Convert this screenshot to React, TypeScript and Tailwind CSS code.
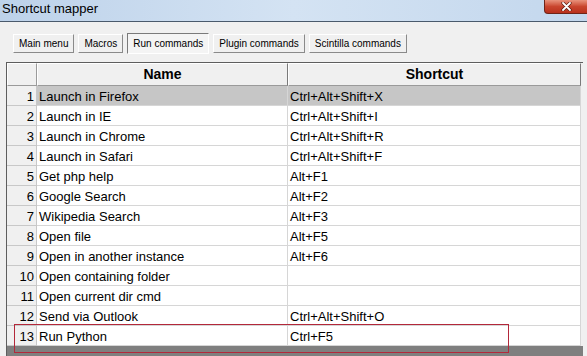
import React from "react";

const rows: [string, string][] = [
  ["Launch in Firefox", "Ctrl+Alt+Shift+X"],
  ["Launch in IE", "Ctrl+Alt+Shift+I"],
  ["Launch in Chrome", "Ctrl+Alt+Shift+R"],
  ["Launch in Safari", "Ctrl+Alt+Shift+F"],
  ["Get php help", "Alt+F1"],
  ["Google Search", "Alt+F2"],
  ["Wikipedia Search", "Alt+F3"],
  ["Open file", "Alt+F5"],
  ["Open in another instance", "Alt+F6"],
  ["Open containing folder", ""],
  ["Open current dir cmd", ""],
  ["Send via Outlook", "Ctrl+Alt+Shift+O"],
  ["Run Python", "Ctrl+F5"],
];

const tabs = ["Main menu", "Macros", "Run commands", "Plugin commands", "Scintilla commands"];

function Tab({ label, active }: { label: string; active: boolean }) {
  return (
    <div
      className={
        active
          ? "h-[21px] px-[5px] flex items-center border border-t-[#7a7a7a] border-l-[#7a7a7a] border-b-white border-r-white bg-[#f4f4f4] text-[10px] text-black"
          : "h-[19px] mt-[1px] px-[5px] flex items-center border border-t-white border-l-white border-b-[#8a8a8a] border-r-[#8a8a8a] bg-[#f0f0f0] text-[10px] text-black"
      }
    >
      {label}
    </div>
  );
}

export default function App() {
  return (
    <div
      className="relative w-[587px] h-[356px] overflow-hidden bg-[#f0f0f0]"
      style={{ fontFamily: '"Liberation Sans", Arial, sans-serif' }}
    >
      {/* title bar */}
      <div className="h-[22px] flex justify-between bg-gradient-to-r from-[#bdd2ea] via-[#d4e3f3] to-[#c3d7ed] border-b border-[#4a5a6c]">
        <div className="pl-[2px] pt-[1px] text-[13px] text-black leading-[16px]">Shortcut mapper</div>
        <div className="w-[45px] h-[14px] -mr-[2px] flex items-center justify-center rounded-bl-[4px] border border-t-0 border-[#6e2418] bg-gradient-to-b from-[#e8927c] via-[#c9452e] to-[#b8301c]">
          <svg width="11" height="9" viewBox="0 0 11 9">
            <path d="M2 1 L9 8 M9 1 L2 8" stroke="#5a1a10" strokeWidth="3.2" strokeLinecap="round" />
            <path d="M2 1 L9 8 M9 1 L2 8" stroke="#ffffff" strokeWidth="1.8" strokeLinecap="round" />
          </svg>
        </div>
      </div>

      {/* tabs */}
      <div className="flex gap-[4px] pl-[13px] pt-[11px]">
        {tabs.map((t) => (
          <Tab key={t} label={t} active={t === "Run commands"} />
        ))}
      </div>

      {/* grid */}
      <div className="ml-[6px] mt-[8px] w-[577px] h-[300px] bg-[#7f7f7f] border-l border-t border-[#5e5e5e]">
        <div className="grid grid-cols-[30px_251px_293px] bg-[#f0f0f0]">
          <div className="h-[23px] border border-t-white border-l-white border-b-[#9a9a9a] border-r-[#9a9a9a]" />
          <div className="h-[23px] flex items-center justify-center font-bold text-[14px] border border-t-white border-l-white border-b-[#9a9a9a] border-r-[#7a7a7a]">
            Name
          </div>
          <div className="h-[23px] flex items-center justify-center font-bold text-[14px] border border-t-white border-l-white border-b-[#9a9a9a] border-r-[#7a7a7a]">
            Shortcut
          </div>
          {rows.map(([name, key], i) => (
            <React.Fragment key={name}>
              <div className="h-[20px] pt-[2px] flex items-center justify-end pr-[2px] text-[13px] bg-[#f0f0f0] border-b border-r border-[#c8c8c8]">
                {i + 1}
              </div>
              <div
                className={
                  i === 0
                    ? "h-[20px] pt-[2px] flex items-center pl-[2px] text-[13px] bg-[#c6c6c6] border-b border-r border-[#d6d6d6]"
                    : "h-[20px] pt-[2px] flex items-center pl-[2px] text-[13px] bg-white border-b border-r border-[#d6d6d6]"
                }
              >
                {name}
              </div>
              <div
                className={
                  i === 0
                    ? "h-[20px] pt-[2px] flex items-center pl-[2px] text-[13px] bg-[#c6c6c6] border-b border-r border-[#d6d6d6]"
                    : "h-[20px] pt-[2px] flex items-center pl-[2px] text-[13px] bg-white border-b border-r border-[#d6d6d6]"
                }
              >
                {key}
              </div>
            </React.Fragment>
          ))}
        </div>
      </div>

      {/* annotation */}
      <div className="absolute left-[14px] top-[324px] w-[495px] h-[29px] border border-[#b3283a]" />
    </div>
  );
}
